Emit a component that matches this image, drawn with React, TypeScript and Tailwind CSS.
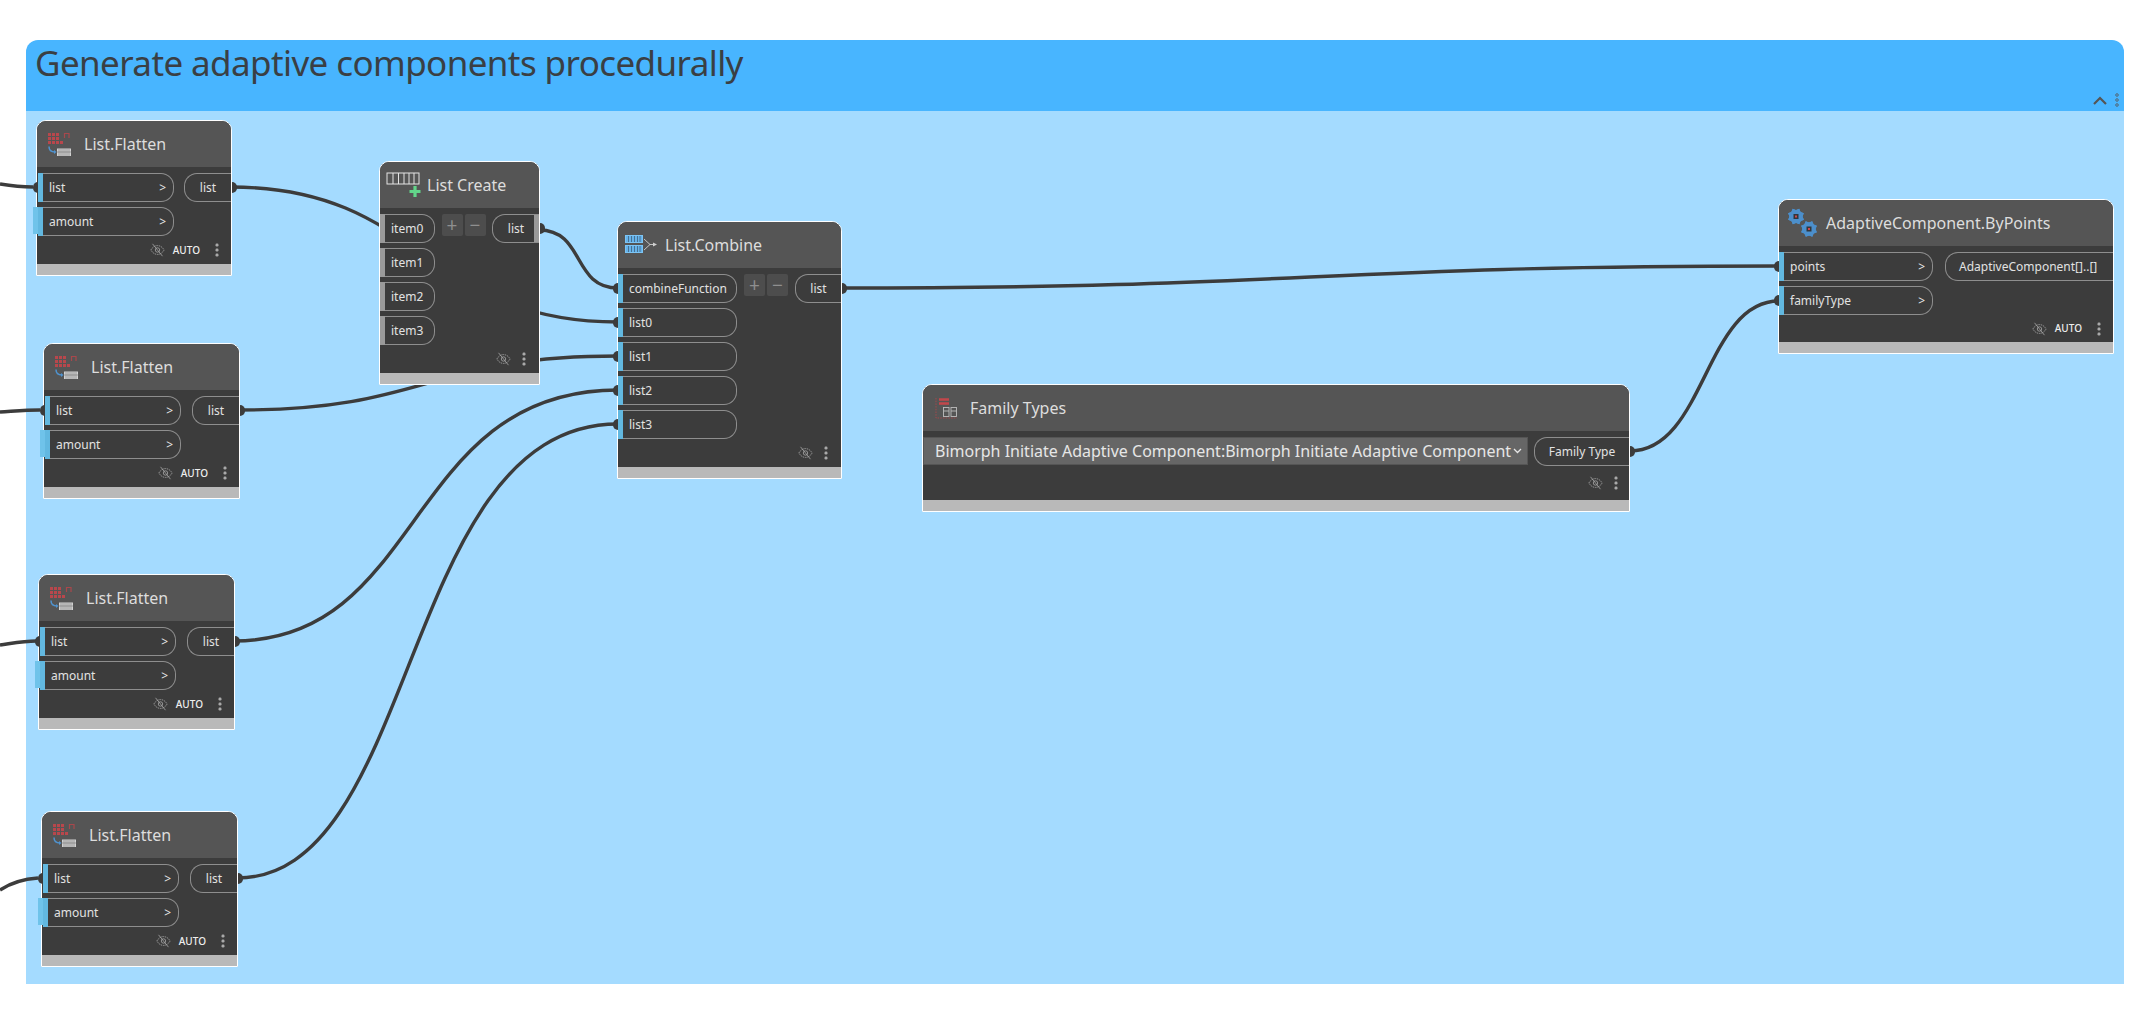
import type { ReactNode } from 'react';

/* Dynamo graph: one group with six nodes on a free canvas, wires underneath. */

const FONT = "font-['Noto_Sans',sans-serif]";

/* ── Icons ─────────────────────────────── */

function EyeOff() {
  return (
    <svg width="15" height="14" viewBox="0 0 15 14" fill="none" stroke="#a8a8a8" strokeWidth="0.8">
      <path d="M0.8 7 C3 3.6 5.2 2.6 7.5 2.6 C9.8 2.6 12 3.6 14.2 7 C12 10.4 9.8 11.4 7.5 11.4 C5.2 11.4 3 10.4 0.8 7 Z" strokeDasharray="1.6 0.8" />
      <circle cx="7.5" cy="7" r="2.2" />
      <path d="M2.5 0.8 L12.5 13.2" />
    </svg>
  );
}

function Dots() {
  return (
    <svg width="4" height="14" viewBox="0 0 4 14" fill="#a9a9a9">
      <rect x="0.5" y="0.5" width="3" height="3" rx="1.2" />
      <rect x="0.5" y="5.5" width="3" height="3" rx="1.2" />
      <rect x="0.5" y="10.5" width="3" height="3" rx="1.2" />
    </svg>
  );
}

function FlattenIcon() {
  const cells = [0, 1, 2].flatMap((r) => [0, 1, 2].map((c) => [c, r]));
  return (
    <svg width="25" height="25" viewBox="0 0 25 25" fill="none">
      {cells.map(([c, r]) => (
        <rect key={`${c}-${r}`} x={1 + c * 4} y={1 + r * 4} width="3" height="3" fill="#b8474c" />
      ))}
      <rect x="13" y="9" width="3" height="3" fill="#b8474c" />
      <path d="M17.5 6 V1.5 H22 V6" stroke="#a8484c" strokeWidth="1.2" />
      <path d="M2 14.5 C2 18 4 20 8 20" stroke="#4f93cf" strokeWidth="1.5" />
      <path d="M7 18 L9.5 20 L7 22 Z" fill="#4f93cf" />
      <rect x="10" y="16.5" width="14" height="7.5" fill="#d2d2d2" />
      <path d="M12 17 V24 M14 17 V24 M16 17 V24 M18 17 V24 M20 17 V24 M22 17 V24 M10 20 H24" stroke="#777" strokeWidth="0.6" />
    </svg>
  );
}

function CreateIcon() {
  return (
    <svg width="36" height="26" viewBox="0 0 36 26" fill="none">
      <rect x="1" y="1" width="32" height="11" stroke="#e4e4e4" strokeWidth="1" />
      <path d="M7 1 V12 M12.5 1 V12 M18 1 V12 M23 1 V12 M28 1 V12" stroke="#e4e4e4" strokeWidth="1" />
      <path d="M29 14 V25 M23.5 19.5 H34.5" stroke="#62d58a" strokeWidth="3.2" />
    </svg>
  );
}

function CombineIcon() {
  return (
    <svg width="33" height="20" viewBox="0 0 33 20" fill="none">
      {[1, 11].map((y) => (
        <g key={y}>
          <rect x="0.5" y={y - 0.5} width="17" height="7" fill="#66b3ea" stroke="#7cc4f4" />
          <path d={`M3.5 ${y} V${y + 6} M6.5 ${y} V${y + 6} M9.5 ${y} V${y + 6} M12.5 ${y} V${y + 6} M15 ${y} V${y + 6}`} stroke="#3f5f7c" strokeWidth="0.8" />
        </g>
      ))}
      <path d="M19 4 L25 9.5 L19 15 M25 9.5 H31" stroke="#d0d0d0" strokeWidth="0.9" />
      <path d="M28 7.5 L32 9.5 L28 11.5 Z" fill="#d0d0d0" />
    </svg>
  );
}

function Gear({ cx, cy }: { cx: number; cy: number }) {
  const teeth = [0, 45, 90, 135];
  return (
    <g>
      {teeth.map((a) => (
        <rect key={a} x={cx - 6} y={cy - 6} width="12" height="12" fill="#4c8fcb" transform={`rotate(${a + 22} ${cx} ${cy})`} />
      ))}
      <rect x={cx - 2.5} y={cy - 2.5} width="5" height="5" fill="#33363b" />
      <rect x={cx - 1} y={cy - 1} width="2" height="2" fill="#d0484c" />
    </g>
  );
}

function GearsIcon() {
  return (
    <svg width="30" height="30" viewBox="0 0 30 30">
      <Gear cx={8} cy={8.5} />
      <Gear cx={21} cy={21} />
    </svg>
  );
}

function FamilyIcon() {
  return (
    <svg width="23" height="21" viewBox="0 0 23 21" fill="none">
      <path d="M4 1.5 H14 M4 5.5 H14" stroke="#c2474b" strokeWidth="2.4" />
      <path d="M1 0 V20 H22" stroke="#a8474b" strokeWidth="0.9" strokeDasharray="1.5 1.2" />
      <rect x="8.5" y="9.5" width="5.5" height="9" stroke="#bdbdbd" strokeWidth="0.9" />
      <rect x="16" y="9.5" width="5.5" height="9" stroke="#bdbdbd" strokeWidth="0.9" />
      <path d="M8.5 13 H14 M16 13 H21.5" stroke="#bdbdbd" strokeWidth="0.9" />
    </svg>
  );
}

/* ── Node parts ─────────────────────────────── */

function Nub({ side }: { side: 'left' | 'right' }) {
  return (
    <span
      className={`absolute top-[9px] h-[11px] w-[5px] bg-[#3c3c3c] ${
        side === 'left' ? 'left-[-5px] rounded-l-full' : 'right-[-6px] rounded-r-full'
      }`}
    />
  );
}

function InPort({
  label,
  width,
  arrow = false,
  gray = false,
  nub = true,
  outer = false,
  inset = false,
}: {
  label: string;
  width: string;
  arrow?: boolean;
  gray?: boolean;
  nub?: boolean;
  outer?: boolean;
  inset?: boolean;
}) {
  return (
    <div className={`relative flex h-[29px] items-center ${width} ${inset ? 'ml-[1px]' : ''}`}>
      {nub && <Nub side="left" />}
      {outer && <span className="absolute left-[-5px] top-0 h-[27px] w-[5px] bg-[#6fc3ea]" />}
      <span className={`h-full w-[5px] shrink-0 ${gray ? 'bg-[#9a9a9a]' : 'bg-[#62b8e0]'}`} />
      <div className="flex h-full min-w-0 flex-1 items-center justify-between rounded-r-[13px] border border-l-0 border-[#8e8e8e] pl-[6px] pr-[7px]">
        <span className={`${FONT} text-[12px] text-[#e2e2e2]`}>{label}</span>
        {arrow && <span className={`${FONT} text-[12px] text-[#e8e8e8]`}>&gt;</span>}
      </div>
    </div>
  );
}

function OutPort({
  label,
  width,
  bar = false,
  nub = true,
  align = 'justify-center',
}: {
  label: string;
  width: string;
  bar?: boolean;
  nub?: boolean;
  align?: string;
}) {
  return (
    <div className={`relative flex h-[29px] items-center ${width}`}>
      {nub && <Nub side="right" />}
      <div className={`flex h-full flex-1 items-center ${align} rounded-l-[13px] border border-r-0 border-[#8e8e8e]`}>
        <span className={`${FONT} text-[12px] text-[#e2e2e2]`}>{label}</span>
      </div>
      {bar && <span className="absolute right-0 top-[1px] h-[27px] w-[5px] bg-[#9a9a9a]" />}
    </div>
  );
}

function Tool({ auto = false, className = '' }: { auto?: boolean; className?: string }) {
  return (
    <div className={`flex items-center justify-end ${className}`}>
      <EyeOff />
      {auto && <span className={`${FONT} ml-[8px] text-[10px] font-medium text-[#eeeeee]`}>AUTO</span>}
      <span className={auto ? 'ml-[15px]' : 'ml-[11px]'}>
        <Dots />
      </span>
    </div>
  );
}

function PlusMinus() {
  return (
    <div className="flex gap-[2px]">
      {['+', '−'].map((s) => (
        <span
          key={s}
          className={`${FONT} flex h-[22px] w-[21px] items-center justify-center rounded-[2px] bg-[#4d4d4d] text-[19px] leading-none text-[#8f8f8f]`}
        >
          {s}
        </span>
      ))}
    </div>
  );
}

function Node({
  pos,
  icon,
  title,
  titleGap,
  children,
}: {
  pos: string;
  icon: ReactNode;
  title: string;
  titleGap: string;
  children: ReactNode;
}) {
  return (
    <div className={`absolute flex flex-col rounded-t-[10px] border border-white bg-[#3c3c3c] ${pos}`}>
      <div className="flex h-[46px] shrink-0 items-center rounded-t-[9px] bg-[#555555] pl-[10px]">
        {icon}
        <span className={`${FONT} ${titleGap} text-[16px] text-[#dddddd]`}>{title}</span>
      </div>
      {children}
      <div className="h-[11px] shrink-0 bg-[#b9b9b9]" />
    </div>
  );
}

function Flatten({ pos }: { pos: string }) {
  return (
    <Node pos={pos} icon={<FlattenIcon />} title="List.Flatten" titleGap="ml-[12px]">
      <div className="flex justify-between pt-[6px]">
        <div className="flex flex-col gap-[5px]">
          <InPort label="list" width="w-[136px]" arrow inset />
          <InPort label="amount" width="w-[136px]" arrow nub={false} outer inset />
        </div>
        <OutPort label="list" width="w-[47px]" />
      </div>
      <Tool auto className="h-[28px] pr-[12px]" />
    </Node>
  );
}

/* ── Wires ─────────────────────────────── */

const WIRES = [
  'M0 184 C12 186 20 187 33 187',
  'M231 187 C424 187 424 322 618 322',
  'M0 412 C16 411 26 410 40 410',
  'M239 410 C428 410 428 356 618 356',
  'M0 645 C14 643 24 641 36 641',
  'M234 641 C425 641 405 390 618 390',
  'M0 890 C12 882 24 879 38 878',
  'M237 878 C420 878 400 424 618 424',
  'M539 230 C585 230 572 288 618 288',
  'M841 288 C1300 288 1320 266 1779 266',
  'M1630 451 C1705 451 1705 301 1779 301',
];

export default function App() {
  return (
    <div className="relative h-[1012px] w-[2156px] overflow-hidden bg-white">
      <div className="absolute left-[26px] top-[40px] flex h-[944px] w-[2098px] flex-col">
        <div className="flex h-[71px] shrink-0 items-start justify-between rounded-t-[12px] bg-[#48b5ff] pl-[9px]">
          <span className={`${FONT} text-[35px] leading-[46px] tracking-[-0.6px] text-[#3a3f44]`}>
            Generate adaptive components procedurally
          </span>
          <div className="mt-[53px] flex items-center gap-[8px] pr-[5px]">
            <svg width="14" height="9" viewBox="0 0 14 9" fill="none" stroke="#555555" strokeWidth="2.2">
              <path d="M1 8 L7 2 L13 8" />
            </svg>
            <svg width="4" height="14" viewBox="0 0 4 14" fill="none" stroke="#555555" strokeWidth="0.8">
              <circle cx="2" cy="2" r="1.3" />
              <circle cx="2" cy="7" r="1.3" />
              <circle cx="2" cy="12" r="1.3" />
            </svg>
          </div>
        </div>
        <div className="flex-1 bg-[#a4dbff]" />
      </div>

      <svg className="absolute left-0 top-0" width="2156" height="1012" fill="none" stroke="#3c3c3c" strokeWidth="3.4">
        {WIRES.map((d) => (
          <path key={d} d={d} />
        ))}
      </svg>

      <Flatten pos="left-[36px] top-[120px] w-[196px]" />
      <Flatten pos="left-[43px] top-[343px] w-[197px]" />
      <Flatten pos="left-[38px] top-[574px] w-[197px]" />
      <Flatten pos="left-[41px] top-[811px] w-[197px]" />

      <Node
        pos="left-[379px] top-[161px] w-[161px]"
        icon={<span className="-ml-[4px]"><CreateIcon /></span>}
        title="List Create"
        titleGap="ml-[5px]"
      >
        <div className="flex justify-between pt-[6px]">
          <div className="flex flex-col gap-[5px]">
            <InPort label="item0" width="w-[55px]" gray nub={false} />
            <InPort label="item1" width="w-[55px]" gray nub={false} />
            <InPort label="item2" width="w-[55px]" gray nub={false} />
            <InPort label="item3" width="w-[55px]" gray nub={false} />
          </div>
          <PlusMinus />
          <OutPort label="list" width="w-[47px]" bar />
        </div>
        <Tool className="h-[28px] pr-[13px]" />
      </Node>

      <Node
        pos="left-[617px] top-[221px] w-[225px]"
        icon={<span className="-ml-[3px]"><CombineIcon /></span>}
        title="List.Combine"
        titleGap="ml-[7px]"
      >
        <div className="flex justify-between pt-[6px]">
          <div className="flex flex-col gap-[5px]">
            <InPort label="combineFunction" width="w-[119px]" />
            <InPort label="list0" width="w-[119px]" />
            <InPort label="list1" width="w-[119px]" />
            <InPort label="list2" width="w-[119px]" />
            <InPort label="list3" width="w-[119px]" />
          </div>
          <PlusMinus />
          <OutPort label="list" width="w-[46px]" />
        </div>
        <Tool className="h-[28px] pr-[13px]" />
      </Node>

      <Node
        pos="left-[922px] top-[384px] w-[708px]"
        icon={<span className="ml-[2px]"><FamilyIcon /></span>}
        title="Family Types"
        titleGap="ml-[12px]"
      >
        <div className="flex justify-between pt-[6px]">
          <div className="flex h-[28px] w-[605px] items-center justify-between border border-[#555555] bg-[#666666] pl-[11px] pr-[5px]">
            <span className={`${FONT} whitespace-nowrap text-[16px] text-[#e6e6e6]`}>
              Bimorph Initiate Adaptive Component:Bimorph Initiate Adaptive Component
            </span>
            <svg width="9" height="6" viewBox="0 0 9 6" fill="none" stroke="#e6e6e6" strokeWidth="1.3">
              <path d="M1 1 L4.5 4.5 L8 1" />
            </svg>
          </div>
          <OutPort label="Family Type" width="w-[95px]" />
        </div>
        <Tool className="h-[34px] pr-[11px]" />
      </Node>

      <Node
        pos="left-[1778px] top-[199px] w-[336px]"
        icon={<span className="-ml-[1px]"><GearsIcon /></span>}
        title="AdaptiveComponent.ByPoints"
        titleGap="ml-[8px]"
      >
        <div className="flex justify-between pt-[6px]">
          <div className="flex flex-col gap-[5px]">
            <InPort label="points" width="w-[154px]" arrow />
            <InPort label="familyType" width="w-[154px]" arrow />
          </div>
          <OutPort label="AdaptiveComponent[]..[]" width="w-[168px]" nub={false} align="justify-start pl-[13px]" />
        </div>
        <Tool auto className="h-[27px] pr-[12px]" />
      </Node>
    </div>
  );
}
